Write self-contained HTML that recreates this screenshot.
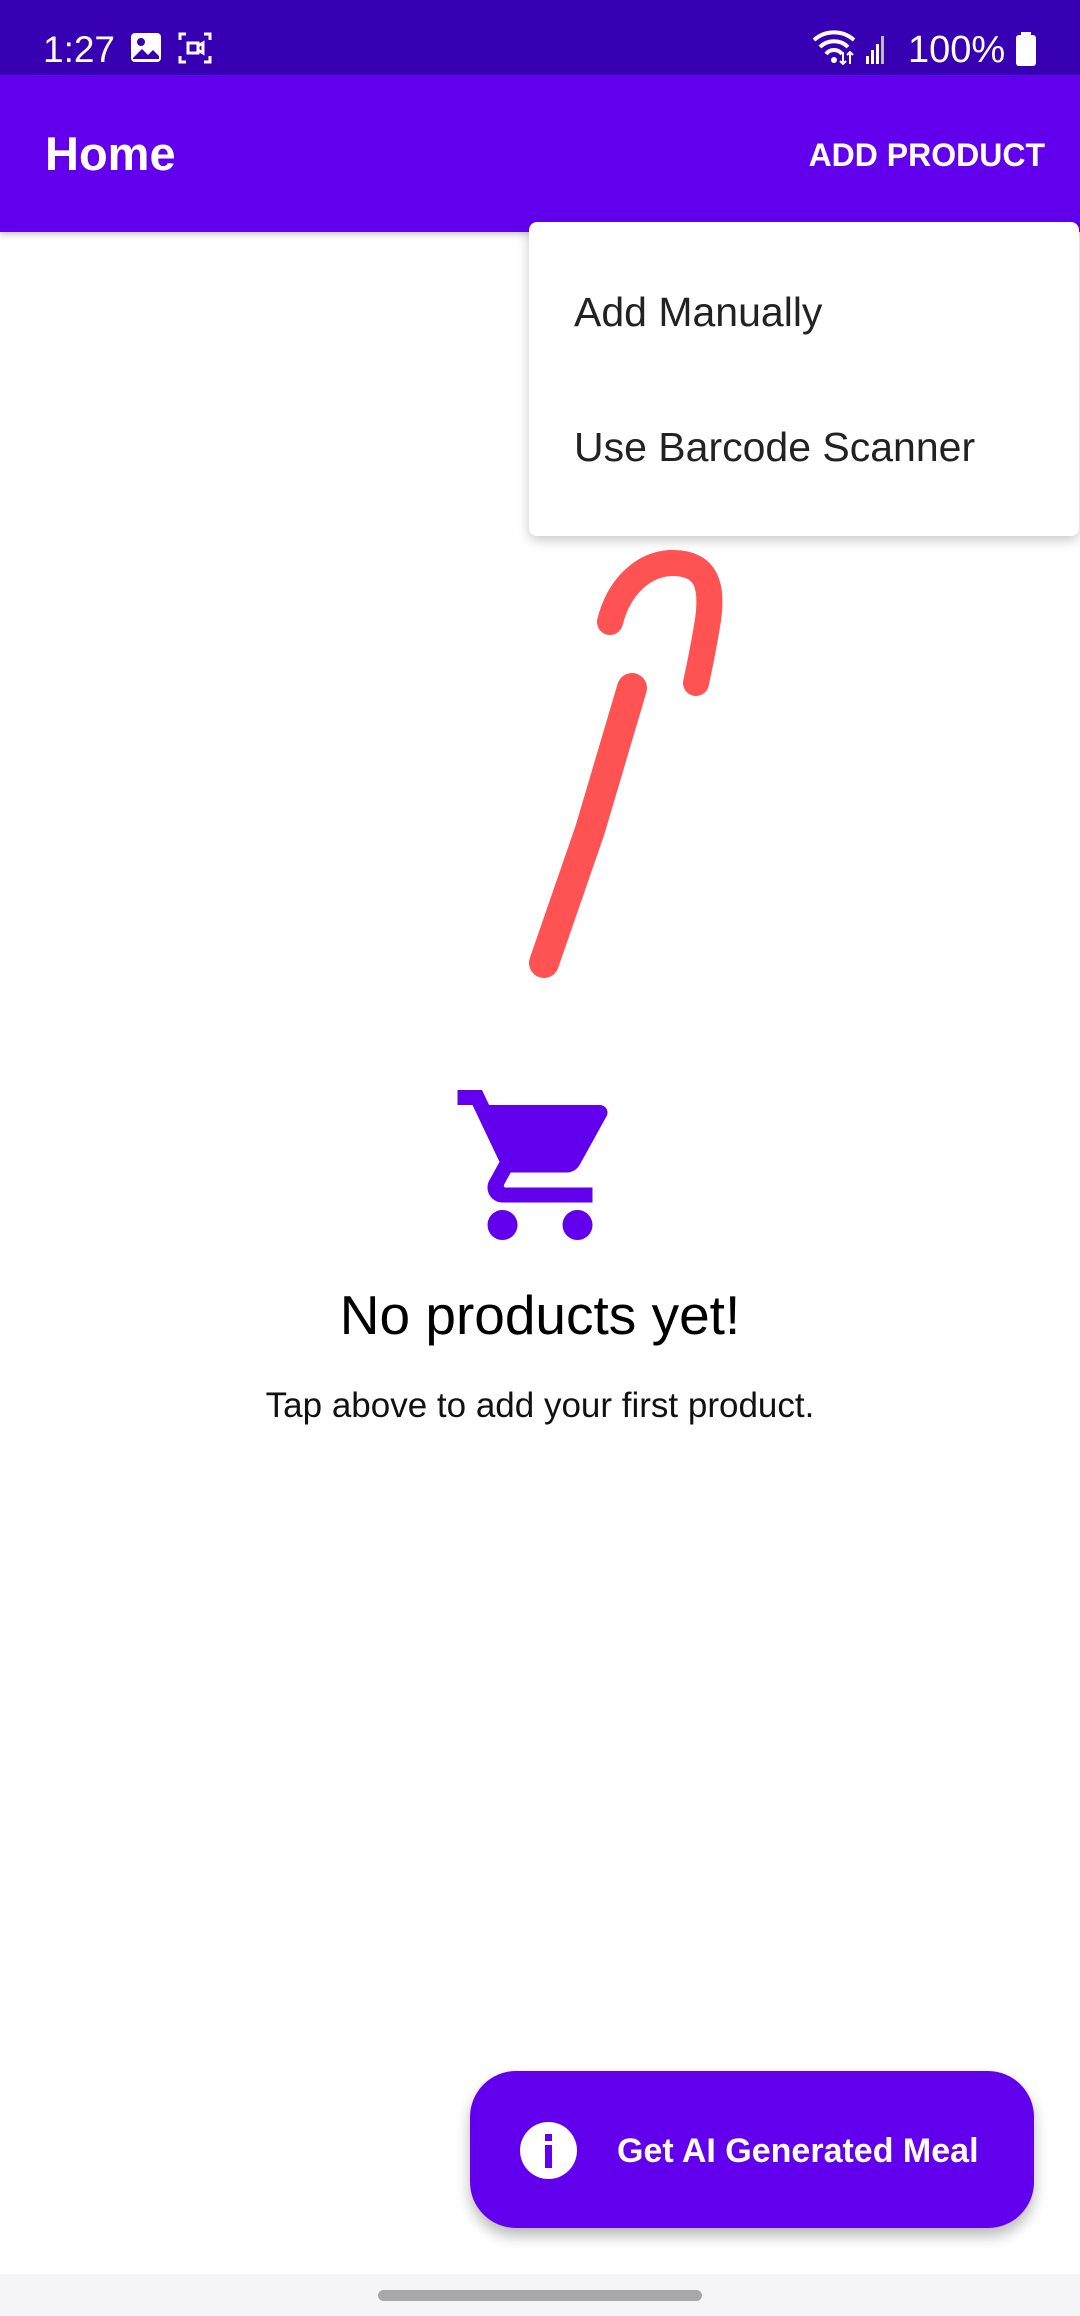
<!DOCTYPE html>
<html><head><meta charset="utf-8"><style>
*{margin:0;padding:0;box-sizing:border-box}
body{width:1080px;height:2316px;position:relative;background:#fff;font-family:"Liberation Sans",sans-serif;overflow:hidden}
.abs{position:absolute}
</style></head><body>
<div class="abs" style="left:0;top:0;width:1080px;height:75px;background:#3700B3"></div>
<div class="abs" style="left:43px;top:31px;color:#fff;font-size:37px;line-height:1">1:27</div>
<svg class="abs" style="left:130px;top:32px" width="34" height="32" viewBox="0 0 34 32"><rect x="1" y="1" width="30" height="29" rx="4" fill="#fff"/><circle cx="11" cy="10" r="4" fill="#3700B3"/><path d="M3 26l9-9 6 6 5-5 6 6v3H3z" fill="#3700B3"/></svg>
<svg class="abs" style="left:178px;top:32px" width="34" height="32" viewBox="0 0 34 32" fill="none" stroke="#fff" stroke-width="3"><path d="M2 8V2h6M26 2h6v6M2 24v6h6M26 30h6v-6"/><rect x="10" y="11" width="10" height="10"/><path d="M20 14l5-3v10l-5-3"/></svg>
<svg class="abs" style="left:812px;top:28px" width="80" height="38" viewBox="0 0 80 38"><path d="M2 12a30 30 0 0 1 40 0M8 19a20 20 0 0 1 28 0M14 26a10 10 0 0 1 16 0" stroke="#fff" stroke-width="4" fill="none"/><circle cx="22" cy="32" r="3" fill="#fff"/><path d="M31 24v12M28 33l3 3 3-3M38 36V24M35 27l3-3 3 3" stroke="#fff" stroke-width="2" fill="none"/><rect x="54" y="28" width="3" height="8" fill="#fff"/><rect x="59" y="22" width="3" height="14" fill="#fff"/><rect x="64" y="16" width="3" height="20" fill="#fff"/><rect x="69" y="8" width="3" height="28" fill="#bbb"/></svg>
<div class="abs" style="left:908px;top:31px;color:#fff;font-size:38px;line-height:1">100%</div>
<svg class="abs" style="left:1014px;top:32px" width="24" height="34" viewBox="0 0 24 34"><rect x="7" y="0" width="10" height="4" fill="#fff"/><rect x="2" y="3" width="20" height="31" rx="3" fill="#fff"/></svg>

<div class="abs" style="left:0;top:75px;width:1080px;height:157px;background:#6200EE;box-shadow:0 3px 6px rgba(0,0,0,.2)"></div>
<div class="abs" style="left:45px;top:130px;color:#fff;font-size:47px;font-weight:bold;line-height:1">Home</div>
<div class="abs" style="right:35px;top:139px;color:#fff;font-size:32px;font-weight:bold;line-height:1">ADD PRODUCT</div>

<div class="abs" style="left:529px;top:222px;width:550px;height:314px;background:#fff;border-radius:8px;box-shadow:0 4px 12px rgba(0,0,0,.22)"></div>
<div class="abs" style="left:574px;top:292px;color:#222;font-size:41px;line-height:1">Add Manually</div>
<div class="abs" style="left:574px;top:427px;color:#222;font-size:41px;line-height:1">Use Barcode Scanner</div>

<svg class="abs" style="left:0;top:0" width="1080" height="1000"><g stroke="#FF5252" fill="none" stroke-linecap="round" stroke-linejoin="round"><path d="M544 963 L590 830 L632 688" stroke-width="30"/><path d="M610 622 C618 590 640 565 670 563 C710 562 712 590 708 620 C704 645 700 665 696 683" stroke-width="26"/></g></svg>

<svg class="abs" style="left:450px;top:1075px" width="180" height="180" viewBox="0 0 24 24"><path fill="#6200EE" d="M7 18c-1.1 0-1.99.9-1.99 2S5.9 22 7 22s2-.9 2-2-.9-2-2-2zM1 2v2h2l3.6 7.59-1.35 2.450c-.16.28-.25.61-.25.96 0 1.1.9 2 2 2h12v-2H7.42c-.14 0-.25-.11-.25-.25l.03-.12.9-1.63h7.45c.75 0 1.41-.41 1.75-1.03l3.58-6.49A1.003 1.003 0 0020 4H5.21l-.94-2H1zm16 16c-1.1 0-1.99.9-1.99 2s.89 2 1.99 2 2-.9 2-2-.9-2-2-2z"/></svg>
<div class="abs" style="left:0;width:1080px;top:1288px;text-align:center;color:#000;font-size:55px;line-height:1">No products yet!</div>
<div class="abs" style="left:0;width:1080px;top:1388px;text-align:center;color:#111;font-size:35px;line-height:1">Tap above to add your first product.</div>

<div class="abs" style="left:470px;top:2071px;width:564px;height:157px;background:#6200EE;border-radius:46px;box-shadow:0 8px 14px rgba(0,0,0,.28)"></div>
<div class="abs" style="left:520px;top:2122px;width:57px;height:57px;border-radius:50%;background:#fff"></div>
<div class="abs" style="left:545px;top:2134px;width:7px;height:7px;background:#6200EE"></div>
<div class="abs" style="left:545px;top:2145px;width:7px;height:23px;background:#6200EE"></div>
<div class="abs" style="left:617px;top:2134px;color:#fff;font-size:34px;font-weight:bold;line-height:1">Get AI Generated Meal</div>

<div class="abs" style="left:0;top:2274px;width:1080px;height:42px;background:#f5f5f7"></div>
<div class="abs" style="left:378px;top:2290px;width:324px;height:11px;border-radius:6px;background:#a8a8a8"></div>
</body></html>
